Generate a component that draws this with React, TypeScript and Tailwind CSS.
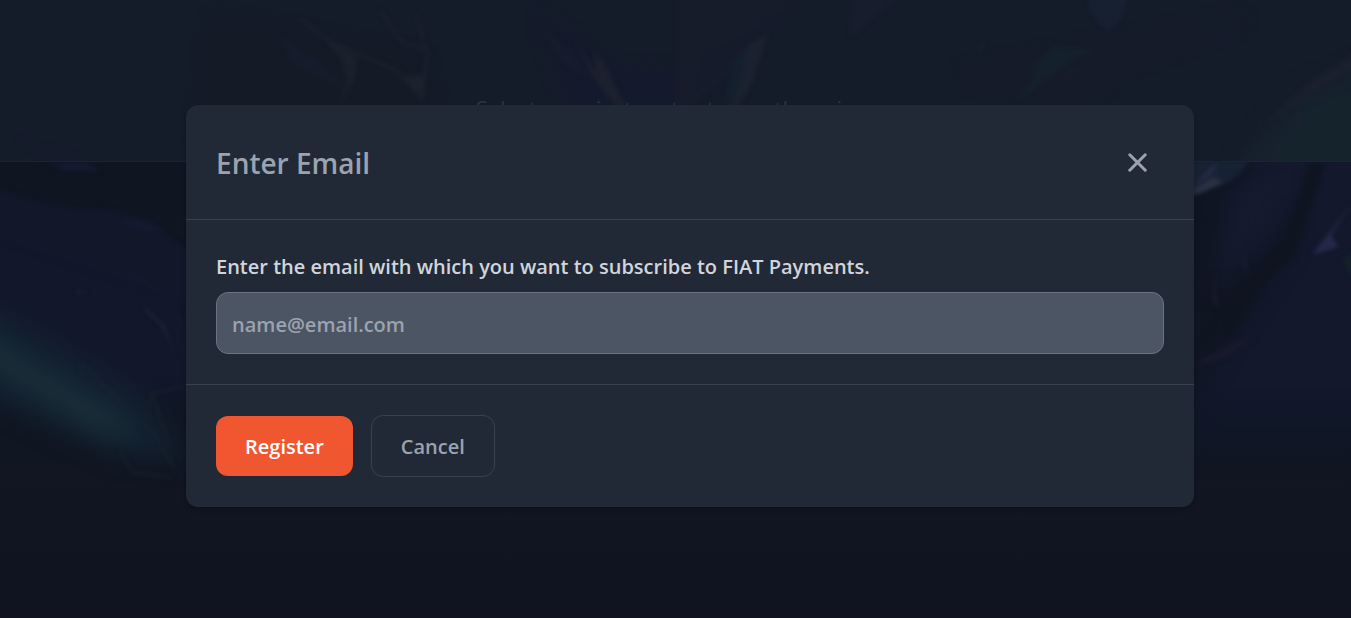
import { X } from "lucide-react";

function BackgroundArt() {
  return (
    <svg
      aria-hidden="true"
      className="absolute inset-0 h-full w-full"
      viewBox="0 0 1351 618"
      preserveAspectRatio="xMidYMid slice"
    >
      <defs>
        <filter id="soft" x="-20%" y="-20%" width="140%" height="140%" colorInterpolationFilters="sRGB">
          <feGaussianBlur stdDeviation="2" />
        </filter>
        <filter id="wide" x="-50%" y="-50%" width="200%" height="200%" colorInterpolationFilters="sRGB">
          <feGaussianBlur stdDeviation="12" />
        </filter>
        <linearGradient id="base" x1="0" y1="0" x2="0" y2="1">
          <stop offset="0.26" stopColor="#0f1521" />
          <stop offset="0.75" stopColor="#101622" />
          <stop offset="1" stopColor="#111420" />
        </linearGradient>
      </defs>
      <rect width="1351" height="618" fill="url(#base)" />

      <g filter="url(#wide)">
        <path d="M-40 215 L190 270 L230 400 L120 395 L-40 340Z" fill="#12172b" />
        <path d="M-40 290 L60 345 L150 400 L185 460 L120 455 L-40 385Z" fill="#12202f" />
        <path d="M-40 318 L30 362 L100 402 L145 438 L100 435 L-40 350Z" fill="#1a2e39" />
        <path d="M1240 140 H1400 V420 H1180 L1260 300 L1300 240Z" fill="#13182d" />
        <path d="M1230 185 L1290 165 L1275 235 L1215 290Z" fill="#151a30" />
        <path d="M1194 400 H1400 V450 H1194Z" fill="#101727" />
      </g>

      <g filter="url(#soft)">
        <path d="M-5 187 C40 205 70 208 105 209 C135 214 152 221 162 230 C170 237 178 243 200 256 L230 320 L-5 240Z" fill="#12172a" />
        <path d="M50 163 H88 L101 171 L64 170Z" fill="#151a34" />
        <path d="M120 219 C145 220 160 226 161 231 C145 232 130 228 120 219Z" fill="#151a31" />
        <path d="M90 245 L185 312 L150 285Z" fill="#161b2d" />
        <path d="M142 304 L165 325 L176 356 L160 324 L147 314Z" fill="#182331" />
        <path d="M77 288 L88 294 L77 294Z" fill="#12232b" />
        <path d="M80 362 L84 390 M82 363 L125 406 L155 435 L175 470 M150 394 L158 411 L170 448 M150 394 L185 386 M120 450 L132 472 L172 478" fill="none" stroke="#1b252f" strokeWidth="1.5" />
        <path d="M1190 160 H1250 C1238 178 1228 185 1212 186 L1190 198Z" fill="#162233" />
        <path d="M1190 192 L1214 177 L1224 183 L1198 194Z" fill="#2b3242" />
        <path d="M1203 175 L1219 160 L1212 174 L1192 187Z" fill="#272a48" />
        <path d="M1310 163 L1325 163 L1295 255 L1260 282 L1230 340 L1225 310 L1282 240Z" fill="#0f1520" />
        <path d="M1354 200 L1331 235 L1338 247 L1312 255 L1328 234Z" fill="#24294a" />
        <path d="M1254 230 L1244 256 L1250 278 L1241 262Z" fill="#191d30" />
        <path d="M1215 272 L1218 310 L1212 300Z" fill="#181a2a" />
        <path d="M1258 335 L1220 360 L1190 367 L1230 345Z" fill="#191a2c" />
        <path d="M1354 252 L1342 262 L1354 278Z" fill="#102327" />
      </g>
    </svg>
  );
}

function HeaderArt() {
  return (
    <svg
      aria-hidden="true"
      className="absolute inset-0 h-full w-full"
      viewBox="0 0 1351 161"
      preserveAspectRatio="none"
    >
      <defs>
        <filter id="haze" x="-20%" y="-20%" width="140%" height="140%" colorInterpolationFilters="sRGB">
          <feGaussianBlur stdDeviation="2" />
        </filter>
        <filter id="glow" x="-20%" y="-20%" width="140%" height="140%" colorInterpolationFilters="sRGB">
          <feGaussianBlur stdDeviation="9" />
        </filter>
      </defs>
      <rect width="1351" height="161" fill="#141b29" />
      <g filter="url(#glow)">
        <path d="M215 20 L420 60 L440 130 H200Z" fill="#141b26" />
        <path d="M540 15 L600 70 L690 75 L690 130 H580Z" fill="#141a2d" />
        <path d="M960 75 L1250 18 L1130 60 L1070 105Z" fill="#161c29" />
        <path d="M1380 55 L1300 90 L1250 145 L1225 180 H1380Z" fill="#17212e" />
        <path d="M1380 75 L1310 100 L1262 180 H1380Z" fill="#15232d" />
      </g>
      <g filter="url(#haze)">
        <path d="M676 -5 H800 L765 40 L740 62 L690 110 H676Z" fill="#171c2b" />
        <path d="M700 60 L790 8 L720 70 L695 95Z" fill="#151b2a" />
        <path d="M748 45 L768 35 L752 85 L736 110 H728Z" fill="#1b212e" />
        <path d="M735 60 L748 46 L738 90 L722 108Z" fill="#13202e" />
        <path d="M574 38 L592 75 L616 108 H626 L604 62 L595 54 L596 72 L580 48Z" fill="#1c212e" />
        <path d="M538 22 L570 52 L592 82 L560 60Z" fill="#171c2c" />
        <path d="M328 44 L346 46 L358 58 L354 80 L340 106 L346 82 L342 60Z" fill="#1a202c" />
        <path d="M278 34 L330 72 L352 92 L292 62Z" fill="#161c2c" />
        <path d="M380 10 L402 42 L426 50 L416 14 M428 50 L422 98 L396 70 L330 42 L300 18" fill="none" stroke="#1b202d" strokeWidth="3" />
        <path d="M402 76 L425 74 L422 100Z" fill="#1b212d" />
        <path d="M852 -5 H900 L870 22 L850 38Z" fill="#171d2c" />
        <path d="M1086 -5 H1128 C1126 17 1116 28 1108 30 C1097 26 1090 14 1086 -5Z" fill="#172031" />
        <path d="M1036 62 L1055 46 L1095 50 L1070 62 L1012 105 L1032 80Z" fill="#15202d" />
        <path d="M978 52 L986 32 L982 52Z" fill="#16242f" />
        <path d="M1356 52 L1310 82 L1265 125 L1356 68Z" fill="#1a202d" />
        <path d="M15 138 L64 150 L88 161 H45Z" fill="#151b2b" />
      </g>
    </svg>
  );
}

export default function App() {
  return (
    <div className="relative min-h-screen overflow-hidden bg-[#101521] font-['Open_Sans','Noto_Sans',sans-serif]">
      <BackgroundArt />
      <header className="relative flex h-[162px] items-center justify-center border-b border-[#1c2331] pt-[54px]">
        <HeaderArt />
        <p className="relative text-[22px] leading-8 text-[#2d3340]">
          Select a project sector to see the prices
        </p>
      </header>

      <div className="absolute inset-0 flex items-center justify-center pr-4 pb-[6px] pl-[45px]">
        <section
          role="dialog"
          aria-modal="true"
          aria-labelledby="dialog-title"
          className="w-full max-w-[1008px] rounded-xl bg-[#212936] shadow-md"
        >
          <div className="flex items-center justify-between border-b border-[#374151] p-[30px]">
            <h1 id="dialog-title" className="pt-0.5 text-[28px] leading-[52px] font-semibold text-[#9ca3af]">
              Enter Email
            </h1>
            <button type="button" aria-label="Close" className="flex h-[54px] w-[54px] items-center justify-center text-[#9ca3af]">
              <X size={31} strokeWidth={2.3} />
            </button>
          </div>
          <form onSubmit={(event) => event.preventDefault()}>
            <div className="border-b border-[#374151] px-[30px] pt-8 pb-[30px]">
              <label htmlFor="email" className="mb-[10px] block text-xl leading-[30px] font-semibold text-[#d1d5db]">
                Enter the email with which you want to subscribe to FIAT Payments.
              </label>
              <input
                id="email"
                type="email"
                placeholder="name@email.com"
                className="block h-[62px] w-full rounded-xl border border-[#6b7280] bg-[#4b5563] px-[15px] pt-0.5 text-xl font-semibold text-white placeholder:text-[#9ca3af]"
              />
            </div>
            <div className="flex items-center gap-[18px] p-[30px]">
              <button type="submit" className="h-[60px] rounded-xl bg-[#f0562f] px-[29px] pt-0.5 text-xl font-semibold text-white">
                Register
              </button>
              <button type="button" className="h-[62px] rounded-xl border border-[#374151] px-[29px] pt-0.5 text-xl font-semibold text-[#9ca3af]">
                Cancel
              </button>
            </div>
          </form>
        </section>
      </div>
    </div>
  );
}
